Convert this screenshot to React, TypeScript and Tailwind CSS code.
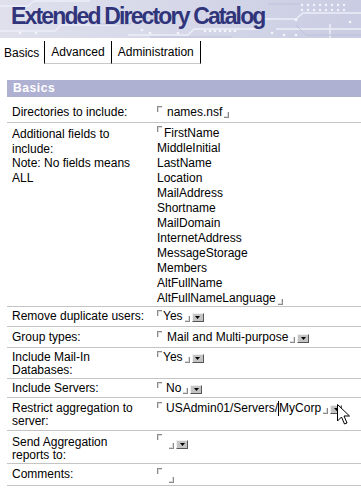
import type { ReactNode } from "react";

const FIELDS = [
  "FirstName",
  "MiddleInitial",
  "LastName",
  "Location",
  "MailAddress",
  "Shortname",
  "MailDomain",
  "InternetAddress",
  "MessageStorage",
  "Members",
  "AltFullName",
  "AltFullNameLanguage",
];

function Open() {
  return (
    <span className="inline-block w-[5px] h-[6px] border-l border-t border-[#8a8a8a] shadow-[inset_1px_1px_0_#dadada] self-start mr-[1px] shrink-0" />
  );
}

function Close() {
  return (
    <span className="inline-block w-[5px] h-[6px] border-r border-b border-[#8a8a8a] shadow-[inset_-1px_-1px_0_#dadada] mb-[1px] ml-[2px] shrink-0" />
  );
}

function Drop() {
  return (
    <span className="inline-flex items-center justify-center w-[12px] h-[9px] ml-[2px] mb-[1px] bg-[#c4c4c4] border border-t-[#f0f0f0] border-l-[#f0f0f0] border-r-[#555] border-b-[#555] shrink-0">
      <svg width="5" height="3" viewBox="0 0 5 3">
        <path d="M0 0H5L2.5 3Z" fill="#000" />
      </svg>
    </span>
  );
}

// pad = full padding classes, rows in the original are not all the same height
function Row({
  label,
  pad,
  children,
}: {
  label: string[];
  pad: string;
  children: ReactNode;
}) {
  return (
    <div className={`relative flex border-b border-[#c4c4c4] leading-[13px] ${pad}`}>
      <div className="w-[150px] shrink-0 pl-[5px]">
        {label.map((l) => (
          <div key={l}>{l}</div>
        ))}
      </div>
      <div className="flex items-end h-[13px]">{children}</div>
    </div>
  );
}

function HeaderArt() {
  const dotsA = Array.from({ length: 8 }, (_, i) => 302 + i * 6);
  const dotsB = Array.from({ length: 7 }, (_, i) => 205 + i * 5);
  return (
    <svg
      className="absolute inset-0"
      width="361"
      height="38"
      viewBox="0 0 361 38"
    >
      <defs>
        <linearGradient id="hg" x1="0" y1="0" x2="1" y2="0">
          <stop offset="0" stopColor="#dfe0ec" />
          <stop offset="0.5" stopColor="#d6d8e9" />
          <stop offset="1" stopColor="#c9cce2" />
        </linearGradient>
      </defs>
      <rect width="361" height="38" fill="url(#hg)" />
      <g stroke="#eceef7" strokeWidth="1.5" fill="none">
        <path d="M0 31H55L61 25H118" />
        <path d="M0 6H28L34 1H90" />
        <path d="M128 35H188L194 29H258" />
        <path d="M262 19H296L303 13H361" />
        <path d="M276 29H361" />
        <path d="M330 24V38" />
      </g>
      <g stroke="#bec1db" strokeWidth="1" fill="none">
        <path d="M150 37H232" />
        <path d="M296 25L306 35H361" />
        <path d="M268 4H300" />
        <path d="M90 24H130L136 18H160" />
      </g>
      <g fill="#f4f5fb">
        {dotsA.map((x) => (
          <circle key={`a${x}`} cx={x} cy={5} r={1.2} />
        ))}
        {dotsA.map((x) => (
          <circle key={`b${x}`} cx={x} cy={10} r={1.2} />
        ))}
        {dotsB.map((x) => (
          <circle key={`c${x}`} cx={x} cy={31} r={1.3} />
        ))}
        <circle cx={20} cy={33} r={1.3} />
        <circle cx={36} cy={33} r={1.3} />
        <circle cx={142} cy={30} r={1.3} />
        <circle cx={150} cy={33} r={1.3} />
        <circle cx={178} cy={33} r={1.3} />
        <circle cx={272} cy={33} r={1.3} />
        <circle cx={284} cy={35} r={1.3} />
        <circle cx={296} cy={35} r={1.3} />
        <circle cx={296} cy={20} r={1.3} />
        <circle cx={350} cy={22} r={1.3} />
      </g>
    </svg>
  );
}

export default function App() {
  return (
    <div className="w-[361px] h-[490px] overflow-hidden bg-white font-['Liberation_Sans',Arial,sans-serif] text-[12px] text-black">
      <div className="relative h-[38px]">
        <HeaderArt />
        <h1 className="relative pl-[11px] pt-[3px] text-[23px] leading-[26px] font-bold tracking-[-1.85px] text-[#30347a]">
          Extended Directory Catalog
        </h1>
      </div>

      <div className="mt-[3px] flex h-[23px] items-stretch leading-[14px]">
        <div className="flex items-center pl-[4px] pr-[5px]">Basics</div>
        <div className="flex items-center pl-[6px] pr-[6px] border-l border-black border-b border-b-[#c8c8c8]">
          Advanced
        </div>
        <div className="flex items-center pl-[6px] pr-[6px] border-l border-r border-black border-b border-b-[#c8c8c8]">
          Administration
        </div>
      </div>

      <div className="mt-[16px] ml-[7px] h-[17px] bg-[#afb1d3] pl-[6px] text-[12px] leading-[17px] font-bold tracking-[0.6px] text-white">
        Basics
      </div>

      <div className="ml-[7px] mt-[5px]">
        <Row label={["Directories to include:"]} pad="pt-[4px] pb-[3px]">
          <Open />
          <span className="pl-[4px]">names.nsf</span>
          <Close />
        </Row>

        <div className="flex border-b border-[#c4c4c4] pt-[3px]">
          <div className="w-[150px] shrink-0 pl-[5px] pt-px leading-[14.5px]">
            <div>Additional fields to</div>
            <div>include:</div>
            <div>Note: No fields means</div>
            <div>ALL</div>
          </div>
          <div className="leading-[15px]">
            {FIELDS.map((f, i) => (
              <div key={f} className="flex items-end h-[15px]">
                {i === 0 && <Open />}
                <span className={i === 0 ? "pl-[1px]" : ""}>{f}</span>
                {i === FIELDS.length - 1 && <Close />}
              </div>
            ))}
          </div>
        </div>

        <Row label={["Remove duplicate users:"]} pad="pt-[3px] pb-[3px]">
          <Open />
          <span>Yes</span>
          <Close />
          <Drop />
        </Row>
        <Row label={["Group types:"]} pad="pt-[4px] pb-[3px]">
          <Open />
          <span className="pl-[4px]">Mail and Multi-purpose</span>
          <Close />
          <Drop />
        </Row>
        <Row label={["Include Mail-In", "Databases:"]} pad="pt-[3px] pb-[1px]">
          <Open />
          <span>Yes</span>
          <Close />
          <Drop />
        </Row>
        <Row label={["Include Servers:"]} pad="pt-[3px] pb-[2px]">
          <Open />
          <span className="pl-[3px]">No</span>
          <Close />
          <Drop />
        </Row>
        <Row label={["Restrict aggregation to", "server:"]} pad="pt-[4px] pb-[2px]">
          <Open />
          <span className="pl-[3px]">USAdmin01/Servers/</span>
          <span className="inline-block w-px h-[15px] bg-black -mb-[1px]" />
          <span>MyCorp</span>
          <Close />
          <Drop />
          <svg
            className="absolute left-[330px] top-[6px]"
            width="13"
            height="21"
            viewBox="0 0 13 21"
          >
            <path
              d="M0.5 0.5V17L4.5 13L7.5 20L10 19L7 12H12.5Z"
              fill="#fff"
              stroke="#000"
              strokeWidth="1"
            />
          </svg>
        </Row>
        <Row label={["Send Aggregation", "reports to:"]} pad="pt-[5px] pb-[1px]">
          <span className="self-start -mt-[2px] flex">
            <Open />
          </span>
          <span className="w-[4px]" />
          <span className="-mb-[1px] flex items-end">
            <Close />
            <Drop />
          </span>
        </Row>
        <Row label={["Comments:"]} pad="pt-[4px] pb-[4px]">
          <Open />
          <span className="w-[4px]" />
          <span className="-mb-[3px] flex">
            <Close />
          </span>
        </Row>
      </div>
    </div>
  );
}
